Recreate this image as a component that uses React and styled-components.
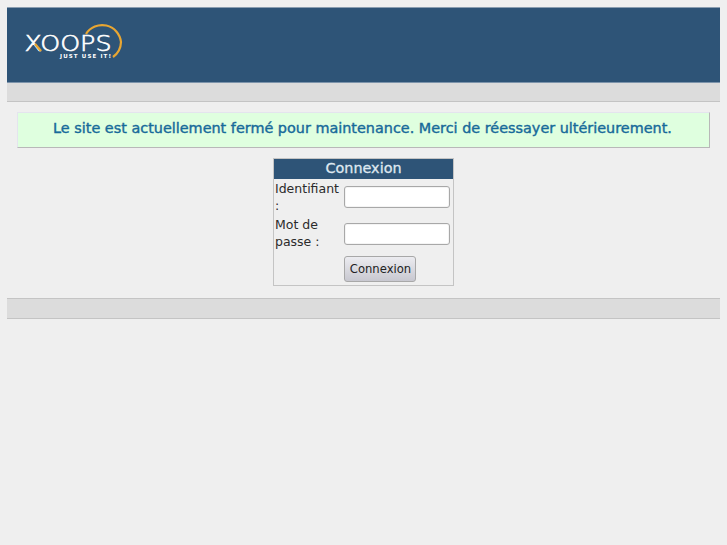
import React from "react";
import styled, { createGlobalStyle } from "styled-components";

const Global = createGlobalStyle`
  html, body { margin: 0; padding: 0; background: #efefef; }
  body { font-family: "DejaVu Sans", sans-serif; font-size: 12.5px; color: #222; }
`;
const Page = styled.div`
  padding: 7px 7px 0 7px;
  min-height: 538px;
`;
const Header = styled.header`
  height: 74px;
  width: 713px;
  background: #2e5477;
  border-top: 1px solid #8a9db0;
  border-bottom: 1px solid #7d94ab;
  display: flex;
  align-items: flex-start;
`;
const Bar = styled.div`
  width: 713px;
  height: ${(p) => p.$h}px;
  box-sizing: border-box;
  background: #dcdcdc;
  border-bottom: 1px solid #c4c4c4;
  border-top: ${(p) => (p.$top ? "1px solid #c4c4c4" : "none")};
  margin-top: ${(p) => p.$mt || 0}px;
`;
const Message = styled.div`
  box-sizing: border-box;
  width: 693px;
  height: 36px;
  margin: 10px 0 10px 10px;
  padding-right: 2px;
  background: #dfffdf;
  border: 1px solid #e4e4ee;
  border-right-color: #b8b8b8;
  border-bottom-color: #b8b8b8;
  color: #176a9a;
  font-size: 14.4px;
  -webkit-text-stroke: 0.4px #176a9a;
  text-align: center;
  line-height: 31px;
`;
const Center = styled.div`
  display: flex;
  justify-content: center;
  width: 713px;
`;
const Login = styled.form`
  box-sizing: border-box;
  width: 181px;
  height: 128px;
  margin: 0;
  border: 1px solid #c4c4c4;
  background: #efefef;
`;
const Title = styled.div`
  height: 20px;
  background: #2e5477;
  color: #dfe8f0;
  text-align: center;
  font-size: 14.4px;
  -webkit-text-stroke: 0.3px #dfe8f0;
  line-height: 18px;
`;
const Row = styled.div`
  display: flex;
  align-items: center;
  height: ${(p) => p.$h}px;
`;
const Label = styled.label`
  width: 70px;
  padding: 0 0 ${(p) => p.$lift || 0}px 1px;
  box-sizing: border-box;
  flex: none;
  line-height: 17px;
  font-size: 12.5px;
  color: #2b2b2b;
`;
const Input = styled.input`
  box-sizing: border-box;
  width: 106px;
  height: 22px;
  background: #fff;
  border: 1px solid #a8a8a8;
  border-radius: 3px;
  box-shadow: inset 0 0 0 1px #f4f4f4;
  padding: 0;
  outline: none;
`;
const Submit = styled.button`
  box-sizing: border-box;
  width: 72px;
  height: 26px;
  padding: 0 0 0 1px;
  border: 1px solid #a8a8a8;
  border-radius: 3px;
  background: linear-gradient(#ececf0, #c8c8d0);
  color: #222;
  font-family: "DejaVu Sans", sans-serif;
  font-size: 11.6px;
`;

const LogoMark = styled.svg`
  flex: none;
  margin: 9px 0 0 13px;
`;

const Logo = () => (
  <LogoMark width="110" height="50" viewBox="20 17 110 50" aria-label="XOOPS">
    <path d="M86 34 A19 19 0 0 1 121 42 A19 19 0 0 1 113 57" fill="none" stroke="#e8a632" strokeWidth="2.2" />
    <text x="24.5" y="51" fontFamily="'DejaVu Sans', sans-serif" fontSize="20.5" fontWeight="200" stroke="#fff" strokeWidth="0.6" fill="#fff" textLength="87" lengthAdjust="spacingAndGlyphs">XOOPS</text>
    <line x1="35" y1="44" x2="41" y2="51" stroke="#e8a632" strokeWidth="2.4" />
    <text x="60" y="58" fontFamily="'DejaVu Sans', sans-serif" fontSize="5.5" fontWeight="700" fill="#fff" textLength="51" lengthAdjust="spacing">JUST USE IT!</text>
  </LogoMark>
);

export default function App() {
  return (
    <Page>
      <Global />
      <Header><Logo /></Header>
      <Bar $h={19} />
      <Message>Le site est actuellement fermé pour maintenance. Merci de réessayer ultérieurement.</Message>
      <Center>
        <Login onSubmit={(e) => e.preventDefault()}>
          <Title>Connexion</Title>
          <Row $h={36}>
            <Label>Identifiant :</Label>
            <Input type="text" />
          </Row>
          <Row $h={37}>
            <Label $lift={2}>Mot de passe :</Label>
            <Input type="password" />
          </Row>
          <Row $h={33}>
            <Label />
            <Submit type="submit">Connexion</Submit>
          </Row>
        </Login>
      </Center>
      <Bar $h={21} $top $mt={12} />
    </Page>
  );
}
